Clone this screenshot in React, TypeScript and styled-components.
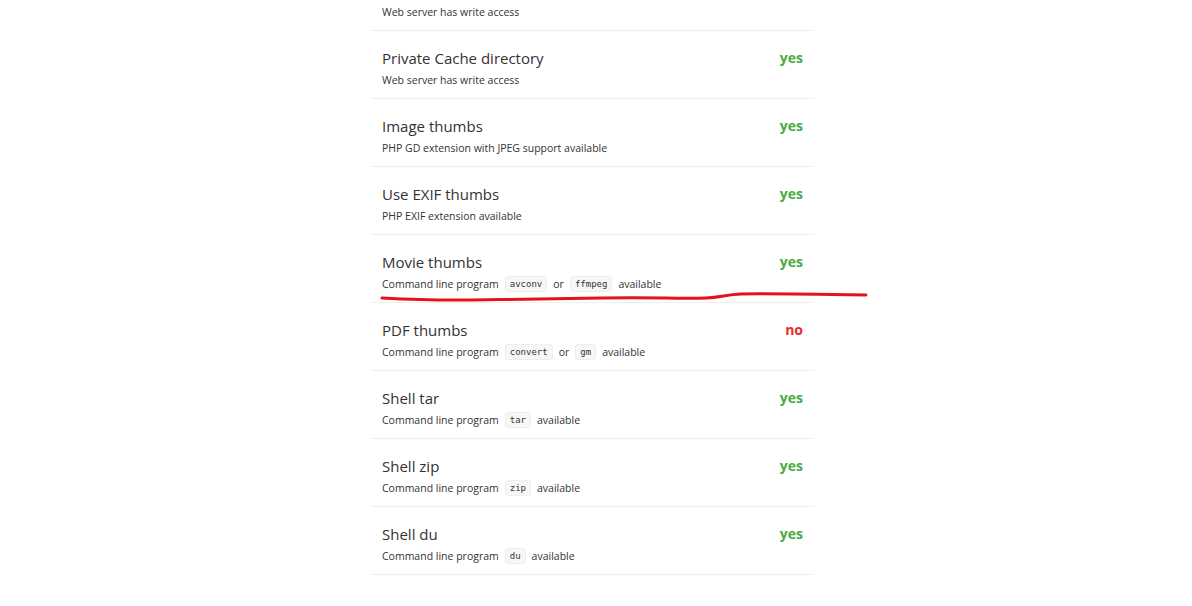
import styled, {createGlobalStyle} from "styled-components";
import {useEffect, useRef} from "react";

type Check = {
    title: string;
    ok: boolean;
    // plain text and program names, alternating; programs get a code chip
    info: (string | {code: string})[];
};

const checks: Check[] = [
    {title: "PHP version", ok: true, info: ["PHP version >= 5.5.0"]},
    {title: "Public Cache directory", ok: true, info: ["Web server has write access"]},
    {title: "Private Cache directory", ok: true, info: ["Web server has write access"]},
    {title: "Image thumbs", ok: true, info: ["PHP GD extension with JPEG support available"]},
    {title: "Use EXIF thumbs", ok: true, info: ["PHP EXIF extension available"]},
    {title: "Movie thumbs", ok: true, info: ["Command line program", {code: "avconv"}, "or", {code: "ffmpeg"}, "available"]},
    {title: "PDF thumbs", ok: false, info: ["Command line program", {code: "convert"}, "or", {code: "gm"}, "available"]},
    {title: "Shell tar", ok: true, info: ["Command line program", {code: "tar"}, "available"]},
    {title: "Shell zip", ok: true, info: ["Command line program", {code: "zip"}, "available"]},
    {title: "Shell du", ok: true, info: ["Command line program", {code: "du"}, "available"]},
];

const App = () => {
    const pageRef = useRef<HTMLDivElement>(null);

    useEffect(() => {
        const el = pageRef.current;
        if (el) {
            el.scrollTop = el.scrollHeight;
        }
    }, []);

    return (
        <Page ref={pageRef}>
            <GlobalStyle/>
            <Content>
                <Header>
                    <Logo>h5ai</Logo>
                    <Version>version 0.29.2</Version>
                </Header>
                <Section>
                    <SectionTitle>Login</SectionTitle>
                    <LoginRow>
                        <PassInput type="password" placeholder="password"/>
                        <LoginButton>Login</LoginButton>
                    </LoginRow>
                </Section>
                <SectionTitle>Server Details</SectionTitle>
                <TestList>
                    {checks.map((c) => (
                        <TestRow key={c.title}>
                            <TestMain>
                                <TestTitle>{c.title}</TestTitle>
                                <TestInfo>
                                    {c.info.map((part, i) =>
                                        typeof part === "string"
                                            ? <span key={i}>{part}</span>
                                            : <Code key={i}>{part.code}</Code>
                                    )}
                                </TestInfo>
                            </TestMain>
                            <TestResult $ok={c.ok}>{c.ok ? "yes" : "no"}</TestResult>
                            {c.title === "Movie thumbs" && (
                                <Scribble viewBox="0 0 500 20" width="500" height="20">
                                    <path
                                        d="M11 13 C 30 14, 60 15.5, 100 15 S 170 14, 230 13 S 300 14, 335 13 C 350 12.5, 355 9.5, 370 9 S 430 9, 495 10"
                                        fill="none"
                                        stroke="#e4121b"
                                        strokeWidth="3"
                                        strokeLinecap="round"
                                    />
                                </Scribble>
                            )}
                        </TestRow>
                    ))}
                </TestList>
            </Content>
        </Page>
    );
}

const GlobalStyle = createGlobalStyle`
    html, body {
        margin: 0;
        padding: 0;
        background: #FFF;
    }
    body {
        font-family: "Open Sans", "Noto Sans", sans-serif;
        color: #333;
    }
`;

const Page = styled.div`
    height: 100vh;
    overflow-y: auto;
    padding-right: 7px;
    box-sizing: border-box;
    &::-webkit-scrollbar {
        width: 4px;
    }
    &::-webkit-scrollbar-track {
        background: #F1F1F1;
    }
    &::-webkit-scrollbar-thumb {
        background: #BDBDBD;
        border-right: 2px solid #F1F1F1;
    }
`;

const Content = styled.div`
    width: 443px;
    margin: 0 auto;
    padding: 40px 0 31px;
`;

const Header = styled.div`
    display: flex;
    flex-direction: column;
    align-items: center;
    gap: 6px;
    padding: 60px 0 40px;
`;

const Logo = styled.div`
    font-size: 48px;
    font-weight: 700;
    color: #555;
`;

const Version = styled.div`
    font-size: 12px;
    color: #999;
`;

const Section = styled.div`
    padding-bottom: 30px;
`;

const SectionTitle = styled.h2`
    margin: 0;
    padding: 20px 11px 14px;
    font-size: 20px;
    font-weight: 400;
    border-bottom: 1px solid #EEE;
`;

const LoginRow = styled.div`
    display: flex;
    gap: 8px;
    padding: 16px 11px;
`;

const PassInput = styled.input`
    flex: 1;
    height: 30px;
    border: 1px solid #DDD;
    padding: 0 8px;
    font-family: inherit;
`;

const LoginButton = styled.button`
    height: 32px;
    padding: 0 16px;
    border: 1px solid #DDD;
    background: #F7F7F7;
    font-family: inherit;
`;

const TestList = styled.div`
    display: flex;
    flex-direction: column;
`;

const TestRow = styled.div`
    position: relative;
    display: flex;
    align-items: flex-start;
    justify-content: space-between;
    padding: 16px 11px 10px;
    border-bottom: 1px solid #EEE;
`;

const TestMain = styled.div`
    display: flex;
    flex-direction: column;
    gap: 3px;
`;

const TestTitle = styled.div`
    font-size: 15px;
    line-height: 22px;
    color: #333;
`;

const TestInfo = styled.div`
    display: flex;
    align-items: center;
    gap: 6px;
    font-size: 10.5px;
    line-height: 16px;
    color: #333;
`;

const Code = styled.code`
    font-family: "DejaVu Sans Mono", monospace;
    font-size: 9px;
    line-height: 14px;
    padding: 0 4px;
    background: #F7F7F7;
    border: 1px solid #EEE;
    border-radius: 3px;
    color: #333;
`;

const TestResult = styled.div<{$ok: boolean}>`
    font-size: 14px;
    font-weight: 700;
    line-height: 22px;
    color: ${(p) => (p.$ok ? "#47AC43" : "#EE2A2A")};
`;

const Scribble = styled.svg`
    position: absolute;
    left: 0;
    top: 50px;
    overflow: visible;
    pointer-events: none;
`;

export default App;
